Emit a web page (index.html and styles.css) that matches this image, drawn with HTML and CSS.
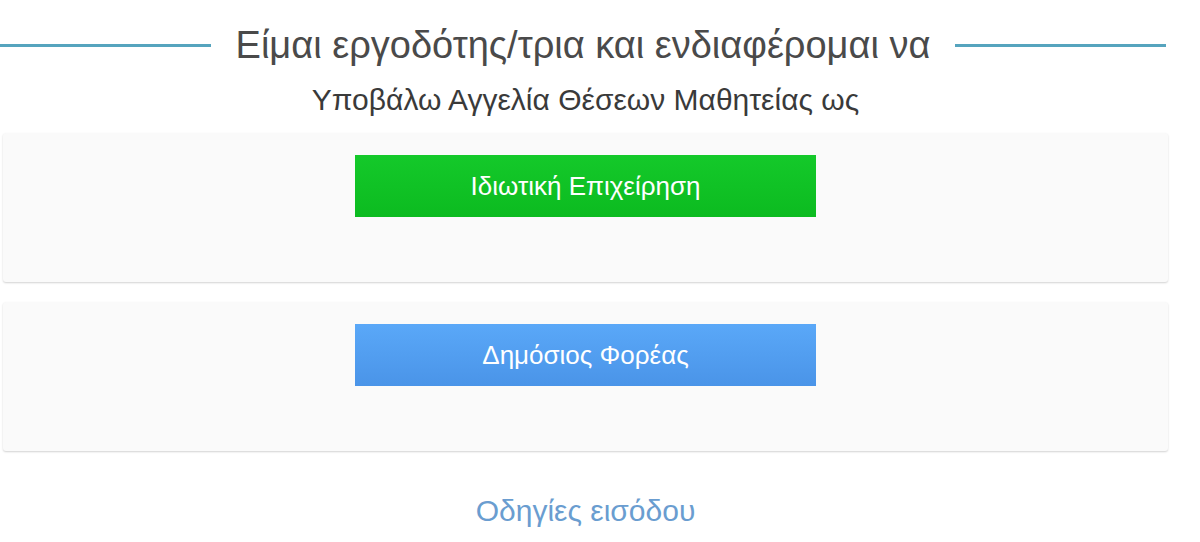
FILE: index.html
```html
<!DOCTYPE html>
<html lang="el">
<head>
    <meta charset="UTF-8">
    <meta name="viewport" content="width=device-width, initial-scale=1.0">
    <title>Εργοδότες</title>
    <link rel="stylesheet" href="styles.css">
</head>
<body>
    <div class="page">
        <div class="title-row">
            <span class="title-line"></span>
            <h1>Είμαι εργοδότης/τρια και ενδιαφέρομαι να</h1>
            <span class="title-line"></span>
        </div>
        <p class="subtitle">Υποβάλω Αγγελία Θέσεων Μαθητείας ως</p>

        <div class="panel">
            <a class="choice-btn private-btn" href="#">Ιδιωτική Επιχείρηση</a>
        </div>

        <div class="panel">
            <a class="choice-btn public-btn" href="#">Δημόσιος Φορέας</a>
        </div>

        <a class="help-link" href="#">Οδηγίες εισόδου</a>
    </div>
</body>
</html>
```

FILE: styles.css
```css
body {
    margin: 0;
    background: #fff;
    font-family: 'Liberation Sans', Arial, sans-serif;
    color: #444;
}

.page {
    width: 1165px;
    margin-left: 3px;
    display: flex;
    flex-direction: column;
    align-items: stretch;
}

/* 标题两侧的横线 */
.title-row {
    display: flex;
    align-items: center;
    gap: 25px;
    padding-top: 23px;
    margin-left: -3px;
    margin-right: 2px;
}

.title-line {
    flex: 1;
    height: 3px;
    background: #56a4be;
}

.title-row h1 {
    margin: 0;
    font-size: 38px;
    font-weight: normal;
    color: #4a4a4a;
    line-height: 44px;
}

.subtitle {
    margin: 15px 0 15px;
    text-align: center;
    font-size: 30px;
    line-height: 36px;
    color: #3a3a3a;
}

.panel {
    height: 149px;
    margin-bottom: 20px;
    background: #fafafa;
    border-radius: 3px;
    box-shadow: 0 1px 2px rgba(0, 0, 0, 0.18);
    display: flex;
    justify-content: center;
    align-items: flex-start;
    padding-top: 22px;
    box-sizing: border-box;
}

.choice-btn {
    display: flex;
    align-items: center;
    justify-content: center;
    width: 461px;
    height: 62px;
    color: #fff;
    font-size: 26px;
    text-decoration: none;
}

.private-btn {
    background: linear-gradient(to bottom, #14c92a 0%, #0cbb20 100%);
}

.public-btn {
    background: linear-gradient(to bottom, #5aa8f8 0%, #4a94e8 100%);
}

.help-link {
    align-self: center;
    margin-top: 22px;
    font-size: 30px;
    line-height: 36px;
    color: #6a9dd0;
    text-decoration: none;
}
```
